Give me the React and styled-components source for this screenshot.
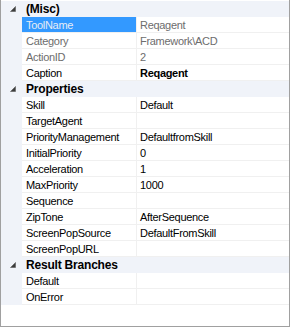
import React from "react";
import styled, { createGlobalStyle } from "styled-components";

const Global = createGlobalStyle`
  html, body { margin: 0; padding: 0; background: #ffffff; }
  body { font-family: "Liberation Sans", Arial, sans-serif; }
`;

const Panel = styled.div`
  box-sizing: border-box;
  width: 290px;
  height: 327px;
  border: 1px solid #a0a0a0;
  border-top: none;
  background: #ffffff;
  padding-top: 1px;
  font-size: 11px;
  letter-spacing: -0.3px;
  color: #000;
`;

const Grid = styled.div`
  display: grid;
  grid-template-columns: 21px 115px 1fr;
  grid-auto-rows: 16px;
`;

const Gutter = styled.div`
  background: #f0f3f9;
  display: flex;
  align-items: center;
  justify-content: flex-start;
  padding-left: 9px;
`;

const HeaderCell = styled.div`
  grid-column: 2 / 4;
  background: #f0f3f9;
  font-weight: bold;
  font-size: 12px;
  letter-spacing: -0.2px;
  padding-left: 4px;
  display: flex;
  align-items: center;
  box-sizing: border-box;
  border-bottom: 1px solid #f0f3f9;
`;

const NameCell = styled.div`
  box-sizing: border-box;
  padding-left: 4px;
  display: flex;
  align-items: center;
  white-space: nowrap;
  overflow: hidden;
  border-bottom: 1px solid #f0f0f0;
  border-right: 1px solid #f0f0f0;
  background: ${(p) => (p.$selected ? "#3399ff" : "transparent")};
  color: ${(p) => (p.$selected ? "#e6ecf5" : p.$readOnly ? "#6d6d6d" : "#000")};
`;

const ValueCell = styled.div`
  box-sizing: border-box;
  padding-left: 3px;
  display: flex;
  align-items: center;
  white-space: nowrap;
  overflow: hidden;
  border-bottom: 1px solid #f0f0f0;
  color: ${(p) => (p.$readOnly ? "#6d6d6d" : "#000")};
  font-weight: ${(p) => (p.$bold ? "bold" : "normal")};
`;

const Arrow = () => (
  <svg width="6" height="6" viewBox="0 0 6 6">
    <polygon points="5.5,0.5 5.5,5.5 0.5,5.5" fill="#3c3c3c" stroke="#5a5a5a" strokeWidth="0.6" />
  </svg>
);

const sections = [
  {
    title: "(Misc)",
    rows: [
      { name: "ToolName", value: "Reqagent", readOnly: true, selected: true },
      { name: "Category", value: "Framework\\ACD", readOnly: true },
      { name: "ActionID", value: "2", readOnly: true },
      { name: "Caption", value: "Reqagent", bold: true },
    ],
  },
  {
    title: "Properties",
    rows: [
      { name: "Skill", value: "Default" },
      { name: "TargetAgent", value: "" },
      { name: "PriorityManagement", value: "DefaultfromSkill" },
      { name: "InitialPriority", value: "0" },
      { name: "Acceleration", value: "1" },
      { name: "MaxPriority", value: "1000" },
      { name: "Sequence", value: "" },
      { name: "ZipTone", value: "AfterSequence" },
      { name: "ScreenPopSource", value: "DefaultFromSkill" },
      { name: "ScreenPopURL", value: "" },
    ],
  },
  {
    title: "Result Branches",
    rows: [
      { name: "Default", value: "" },
      { name: "OnError", value: "" },
    ],
  },
];

export default function App() {
  return (
    <>
      <Global />
      <Panel>
        <Grid>
          {sections.map((s) => (
            <React.Fragment key={s.title}>
              <Gutter>
                <Arrow />
              </Gutter>
              <HeaderCell>{s.title}</HeaderCell>
              {s.rows.map((r) => (
                <React.Fragment key={r.name}>
                  <Gutter />
                  <NameCell $selected={r.selected} $readOnly={r.readOnly}>
                    {r.name}
                  </NameCell>
                  <ValueCell $readOnly={r.readOnly} $bold={r.bold}>
                    {r.value}
                  </ValueCell>
                </React.Fragment>
              ))}
            </React.Fragment>
          ))}
        </Grid>
      </Panel>
    </>
  );
}
